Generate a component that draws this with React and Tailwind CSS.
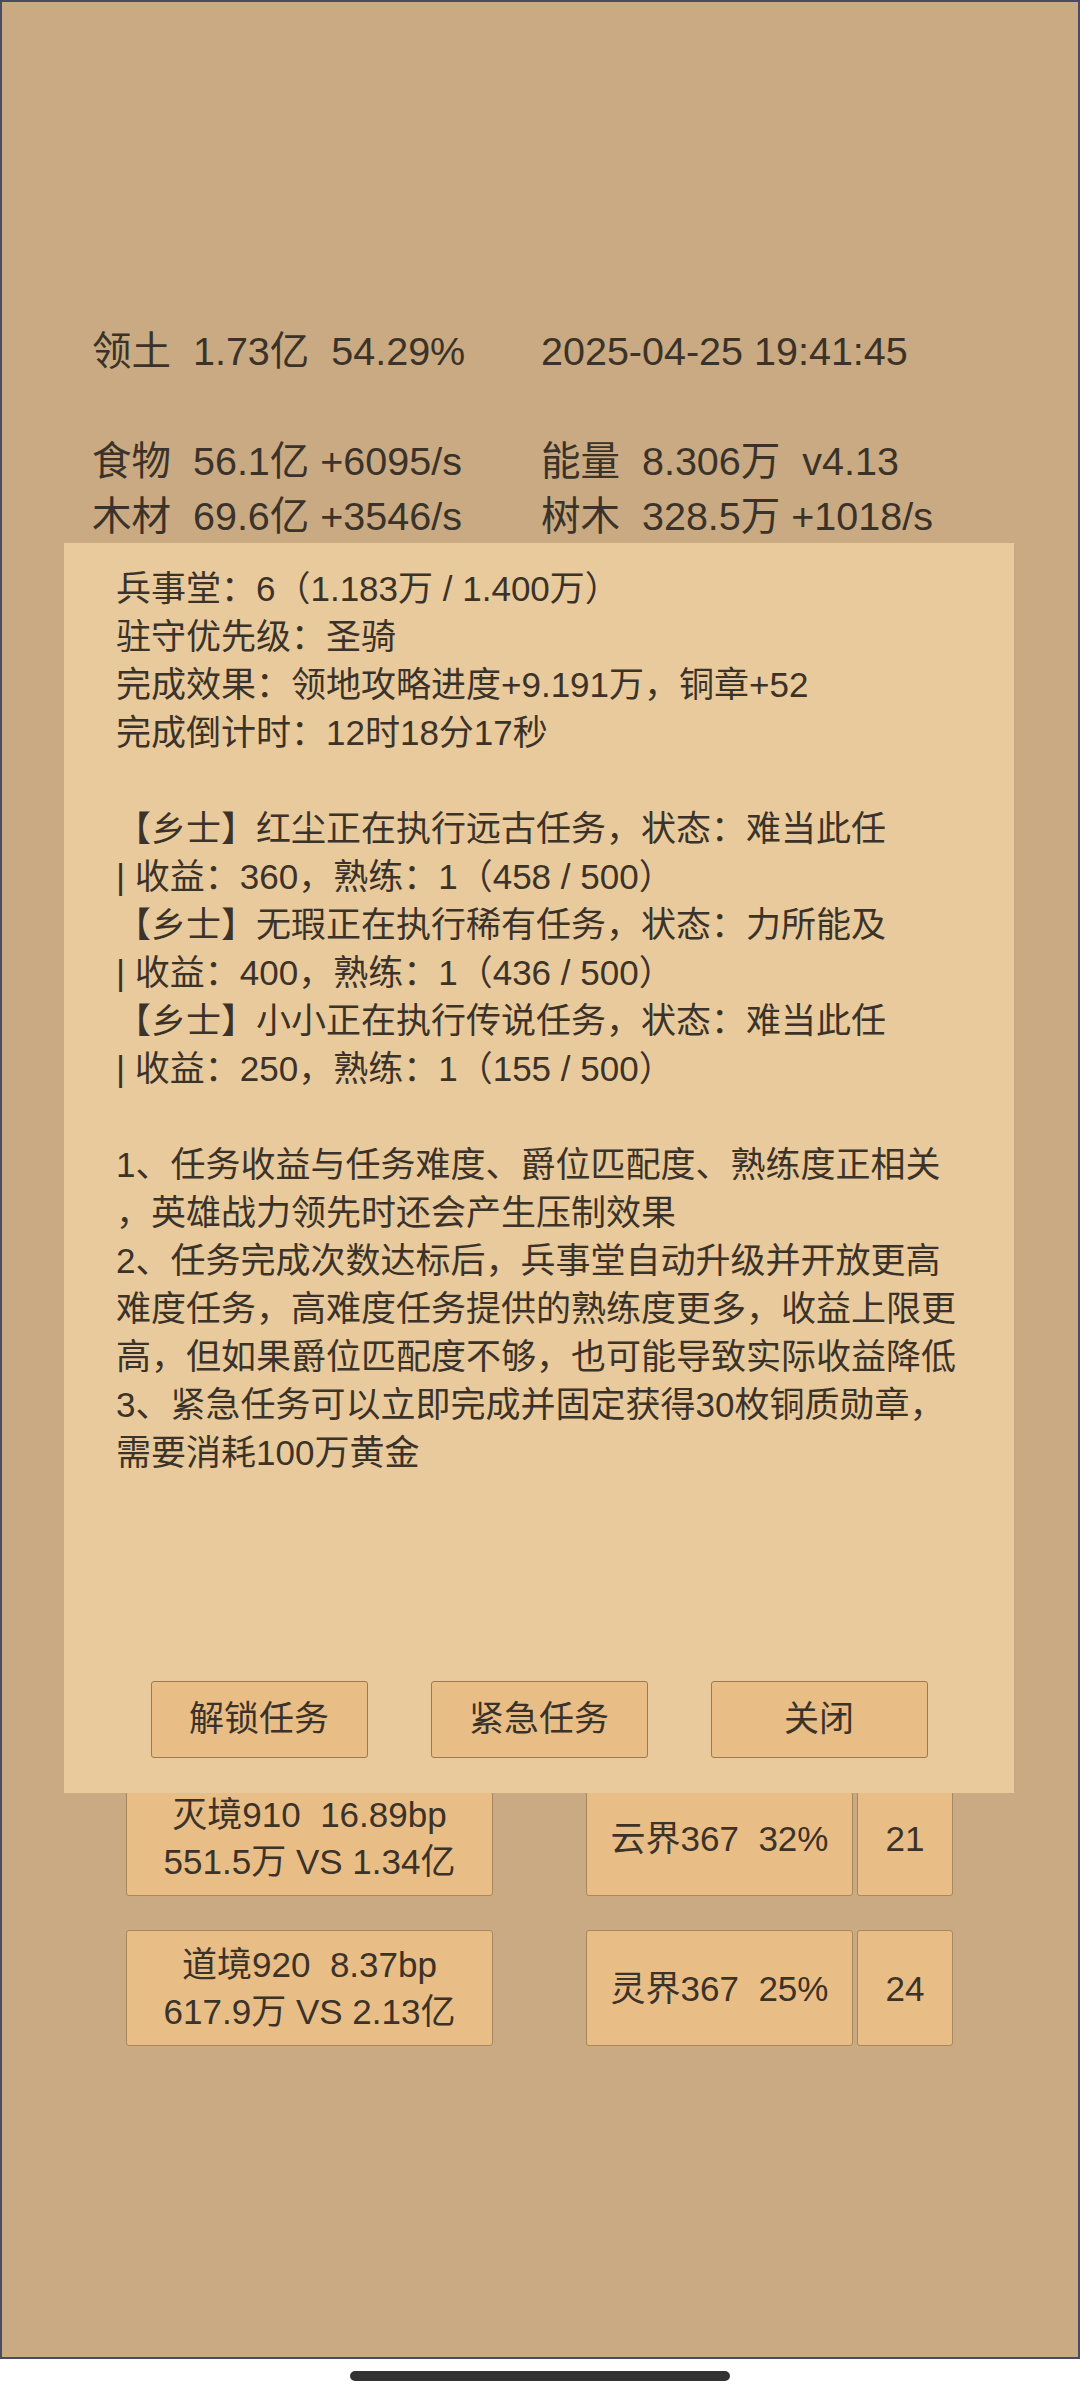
import React from "react"

const taskLines = [
  "兵事堂：6（1.183万 / 1.400万）",
  "驻守优先级：圣骑",
  "完成效果：领地攻略进度+9.191万，铜章+52",
  "完成倒计时：12时18分17秒",
  "",
  "【乡士】红尘正在执行远古任务，状态：难当此任",
  "| 收益：360，熟练：1（458 / 500）",
  "【乡士】无瑕正在执行稀有任务，状态：力所能及",
  "| 收益：400，熟练：1（436 / 500）",
  "【乡士】小小正在执行传说任务，状态：难当此任",
  "| 收益：250，熟练：1（155 / 500）",
  "",
  "1、任务收益与任务难度、爵位匹配度、熟练度正相关",
  "，英雄战力领先时还会产生压制效果",
  "2、任务完成次数达标后，兵事堂自动升级并开放更高",
  "难度任务，高难度任务提供的熟练度更多，收益上限更",
  "高，但如果爵位匹配度不够，也可能导致实际收益降低",
  "3、紧急任务可以立即完成并固定获得30枚铜质勋章，",
  "需要消耗100万黄金",
]

const rows = [
  { a1: "灭境910  16.89bp", a2: "551.5万 VS 1.34亿", b: "云界367  32%", c: "21" },
  { a1: "道境920  8.37bp", a2: "617.9万 VS 2.13亿", b: "灵界367  25%", c: "24" },
]

function Card({ className, children }) {
  return (
    <div className={`h-[116px] bg-[#e9be86] border border-[#a8875c] rounded-[3px] flex flex-col items-center justify-center ${className}`}>
      {children}
    </div>
  )
}

export default function App() {
  return (
    <div className="w-[1080px] h-[2400px] bg-white flex flex-col font-['Liberation_Sans','Noto_Sans_CJK_SC',sans-serif] text-[#3b3329]">
      <div className="relative h-[2359px] border-2 border-[#4a4c66] bg-[#c9aa82]">
        {/* resource stats */}
        <div className="grid grid-cols-[449px_1fr] pl-[90px] pt-[322px] text-[39.5px] leading-[55px] whitespace-pre">
          <div>领土  1.73亿  54.29%</div>
          <div>2025-04-25 19:41:45</div>
          <div className="col-span-2 h-[55px]"></div>
          <div>食物  56.1亿 +6095/s</div>
          <div>能量  8.306万  v4.13</div>
          <div>木材  69.6亿 +3546/s</div>
          <div>树木  328.5万 +1018/s</div>
        </div>

        {/* realm rows */}
        <div className="mt-[1236px] pl-[124px] flex flex-col gap-[34px] text-[35px] leading-[47px] whitespace-pre">
          {rows.map((r) => (
            <div key={r.c} className="flex">
              <Card className="w-[367px]">
                <div>{r.a1}</div>
                <div>{r.a2}</div>
              </Card>
              <Card className="w-[267px] ml-[93px]">{r.b}</Card>
              <Card className="w-[96px] ml-[4px]">{r.c}</Card>
            </div>
          ))}
        </div>

        {/* barracks dialog */}
        <div className="absolute left-[62px] top-[541px] w-[950px] h-[1250px] bg-[#e9ca9c] flex flex-col pl-[52px] pt-[22px] pb-[35px]">
          <div className="text-[35px] leading-[48px] whitespace-pre">
            {taskLines.map((line, i) => (
              <div key={i} className="h-[48px]">{line}</div>
            ))}
          </div>
          <div className="mt-auto -ml-[52px] flex justify-center gap-[63px]">
            {["解锁任务", "紧急任务", "关闭"].map((t) => (
              <button
                key={t}
                className="w-[217px] h-[77px] bg-[#e9be86] border border-[#9c7a4e] rounded-[3px] text-[35px] text-[#3b3329] flex items-center justify-center"
              >
                {t}
              </button>
            ))}
          </div>
        </div>
      </div>
      <div className="mt-[12px] mx-auto w-[380px] h-[10px] rounded-full bg-[#333333]"></div>
    </div>
  )
}
